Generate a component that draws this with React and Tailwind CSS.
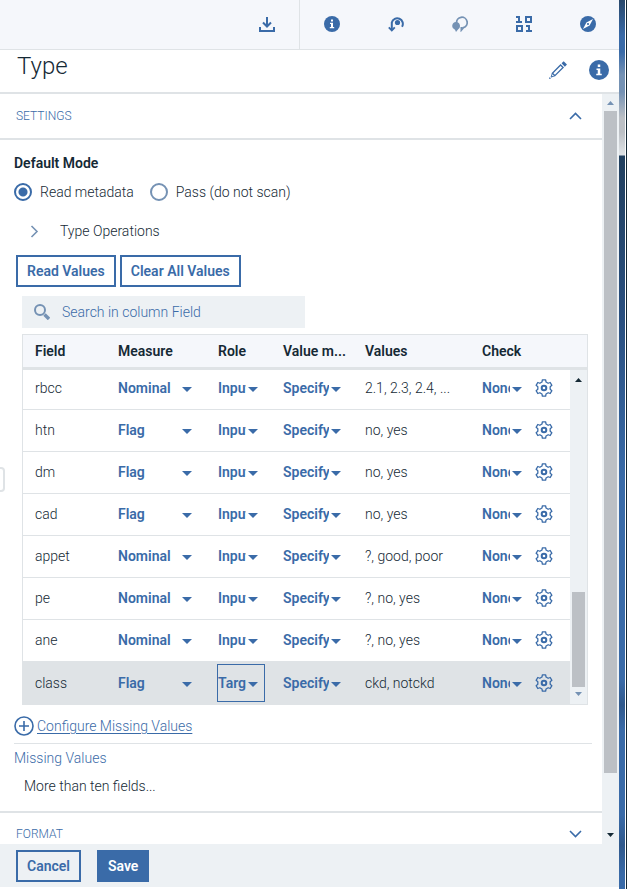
import React from "react";

const rows = [
  { field: "rbcc", measure: "Nominal", role: "Input", values: "2.1, 2.3, 2.4, ..." },
  { field: "htn", measure: "Flag", role: "Input", values: "no, yes" },
  { field: "dm", measure: "Flag", role: "Input", values: "no, yes" },
  { field: "cad", measure: "Flag", role: "Input", values: "no, yes" },
  { field: "appet", measure: "Nominal", role: "Input", values: "?, good, poor" },
  { field: "pe", measure: "Nominal", role: "Input", values: "?, no, yes" },
  { field: "ane", measure: "Nominal", role: "Input", values: "?, no, yes" },
  { field: "class", measure: "Flag", role: "Target", values: "ckd, notckd", selected: true },
];

function InfoIcon({ className }) {
  return (
    <svg viewBox="0 0 16 16" className={className} aria-hidden="true">
      <circle cx="8" cy="8" r="8" fill="#3a6ba8" />
      <path d="M7 3.6h2v2H7zM6 6.7h3v4.2h1.2v1.3H5.8v-1.3H7V8H6z" fill="#fff" />
    </svg>
  );
}

function DownloadIcon() {
  return (
    <svg viewBox="0 0 16 16" className="size-4" fill="none" stroke="#3a6ba8" strokeWidth="2" aria-hidden="true">
      <path d="M8 1v10M4 6.500l4 4 4-4M1 11v4h14v-4" />
    </svg>
  );
}

function LoopIcon() {
  return (
    <svg viewBox="0 0 16 16" className="size-4" fill="none" aria-hidden="true">
      <circle cx="9.5" cy="6.500" r="2.600" fill="#3a6ba8" />
      <path d="M14 10.800A5.600 5.600 0 1 0 3.800 6.500V14" stroke="#3a6ba8" strokeWidth="2" />
      <path d="M.800 11.400l3 3 3-3" stroke="#3a6ba8" strokeWidth="1.800" />
    </svg>
  );
}

function CommentIcon() {
  return (
    <svg viewBox="0 0 16 16" className="size-4" aria-hidden="true">
      <path d="M4.600 7A5.300 5.300 0 1 1 11.400 11.600L9.400 14V11" fill="none" stroke="#7592b4" strokeWidth="1.800" />
      <path d="M4 6a4 4 0 0 1 2.200 7.300L4 16l-1-2.200A4 4 0 0 1 4 6z" fill="#7592b4" />
    </svg>
  );
}

function BinaryIcon() {
  return (
    <svg viewBox="0 0 16 16" className="size-4" fill="none" stroke="#3a6ba8" strokeWidth="2" aria-hidden="true">
      <path d="M0 1h3v5M0 6h6M10 1h5v5h-5zM1 10h5v5H1zM10 10h3v5M10 15h6" />
    </svg>
  );
}

function CompassIcon() {
  return (
    <svg viewBox="0 0 16 16" className="size-4" aria-hidden="true">
      <circle cx="8" cy="8" r="8" fill="#3a6ba8" />
      <path d="M13 3L9.600 9.600 3 13l3.400-6.600z" fill="#fff" />
      <circle cx="8" cy="8" r="1.100" fill="#3a6ba8" />
    </svg>
  );
}

function PencilIcon() {
  return (
    <svg viewBox="0 0 18 18" className="size-[18px]" fill="none" stroke="#3a6ba8" strokeWidth="1.300" aria-hidden="true">
      <path d="M11.600 4l2.500 2.500-8.200 8.200-2.500-2.500z" />
      <path d="M13.600 1.300l3.300 3.300" strokeWidth="3" />
      <path d="M3.400 12.200l-1.300 3.900 3.800-1.400" strokeWidth="1" />
      <path d="M0 18l.6-2 1.400 1.400z" fill="#3a6ba8" stroke="none" />
    </svg>
  );
}

function Chevron({ d, w, h, stroke = "#3a6ba8" }) {
  return (
    <svg viewBox={`0 0 ${w} ${h}`} width={w} height={h} fill="none" stroke={stroke} strokeWidth="1.600" aria-hidden="true">
      <path d={d} />
    </svg>
  );
}

const gearPath = (() => {
  const pts = [];
  for (let i = 0; i < 6; i++) {
    const base = (i * 60 - 90) * (Math.PI / 180);
    [[-0.33, 6.3], [-0.2, 8.3], [0.2, 8.3], [0.33, 6.3]].forEach(([a, r]) => {
      pts.push(`${(9 + r * Math.cos(base + a)).toFixed(2)} ${(9 + r * Math.sin(base + a)).toFixed(2)}`);
    });
  }
  return `M${pts.join("L")}z`;
})();

function GearIcon() {
  return (
    <svg viewBox="0 0 18 18" className="size-[18px]" fill="none" stroke="#3a6ba8" aria-hidden="true">
      <path d={gearPath} strokeWidth="1.300" strokeLinejoin="round" />
      <circle cx="9" cy="9" r="2.300" strokeWidth="2" />
    </svg>
  );
}

function Dropdown({ label, value, className, focused }) {
  return (
    <div className={`relative h-9 ${className} ${focused ? "outline outline-[#3a6ba8]" : ""}`}>
      <select
        aria-label={label}
        defaultValue={value}
        className="block h-9 w-full cursor-pointer appearance-none overflow-hidden bg-transparent pr-[18px] font-semibold text-[#3a6ba8] outline-none"
      >
        <option>{value}</option>
      </select>
      <svg viewBox="0 0 10 5" className="pointer-events-none absolute top-[17px] right-[6px] h-[5px] w-[10px]" fill="#3a6ba8" aria-hidden="true">
        <path d="M0 0h10L5 5z" />
      </svg>
    </div>
  );
}

function Arrow({ up, color }) {
  return (
    <svg viewBox="0 0 7 4" className="h-1 w-[7px]" fill={color} aria-hidden="true">
      <path d={up ? "M0 4h7L3.500 0z" : "M0 0h7L3.500 4z"} />
    </svg>
  );
}

function ToolButton({ label, children }) {
  return (
    <button type="button" aria-label={label} className="flex h-full w-16 items-center justify-center pb-px">
      {children}
    </button>
  );
}

function Radio({ label, checked }) {
  return (
    <label className="flex items-center gap-2">
      <input
        type="radio"
        name="mode"
        defaultChecked={checked}
        className="size-[18px] appearance-none rounded-full border-2 border-[#7592b4] checked:border-[#3a6ba8] checked:bg-[radial-gradient(circle,#3a6ba8_4px,transparent_5px)]"
      />
      <span>{label}</span>
    </label>
  );
}

export default function App() {
  return (
    <div className="flex h-screen overflow-hidden bg-white font-['Roboto','Liberation_Sans',sans-serif] text-sm leading-5 font-light text-[#152935]">
      <div className="relative flex min-w-0 flex-1 flex-col">
        <nav className="flex h-[50px] shrink-0 justify-end border-b border-[#dfe3e6] bg-[#f5f7fb]">
          <ToolButton label="Download"><DownloadIcon /></ToolButton>
          <div className="-mr-px flex border-l border-[#dfe3e6]">
            <ToolButton label="Information"><InfoIcon className="size-4" /></ToolButton>
            <ToolButton label="Versions"><LoopIcon /></ToolButton>
            <ToolButton label="Comments"><CommentIcon /></ToolButton>
            <ToolButton label="Data"><BinaryIcon /></ToolButton>
            <ToolButton label="Explore"><CompassIcon /></ToolButton>
          </div>
        </nav>

        <header className="flex h-11 shrink-0 items-center border-b-2 border-[#dfe3e6] pr-[10px] pb-[2px] pl-[17px]">
          <h1 className="flex-1 pb-2 text-2xl leading-8">Type</h1>
          <div className="flex items-center gap-[22px]">
            <button type="button" aria-label="Edit name"><PencilIcon /></button>
            <button type="button" aria-label="Help"><InfoIcon className="size-5" /></button>
          </div>
        </header>

        <div className="flex min-h-0 flex-1">
          <main className="min-w-0 flex-1 overflow-hidden">
            <button type="button" className="flex h-[46px] w-full items-center justify-between border-b-2 border-[#dfe3e6] pr-5 pl-4 text-[#3a6ba8]">
              <span className="text-xs">SETTINGS</span>
              <Chevron d="M1 7l5.500-5.500L12 7" w={13} h={8} />
            </button>

            <section className="border-b-2 border-[#dfe3e6] pt-[13px] pb-[15px]">
              <fieldset className="px-[14px]">
                <legend className="font-semibold">Default Mode</legend>
                <div className="mt-[9px] flex gap-4">
                  <Radio label="Read metadata" checked />
                  <Radio label="Pass (do not scan)" />
                </div>
              </fieldset>

              <button type="button" className="mt-[19px] flex items-center gap-[21px] pl-[30px]">
                <Chevron d="M1.500 1l5.500 5.500L1.500 12" w={9} h={13} stroke="#7592b4" />
                <span>Type Operations</span>
              </button>

              <div className="mt-[14px] flex gap-1 px-4 font-semibold text-[#3a6ba8]">
                <button type="button" className="h-8 border-2 border-[#3a6ba8] px-[9px]">Read Values</button>
                <button type="button" className="h-8 border-2 border-[#3a6ba8] px-[9px]">Clear All Values</button>
              </div>

              <label className="mt-[9px] ml-[22px] flex h-8 w-[283px] items-center gap-3 bg-[#edf1f4] px-3">
                <svg viewBox="0 0 16 16" className="size-4 shrink-0" fill="none" stroke="#7592b4" strokeWidth="2" aria-hidden="true">
                  <circle cx="6" cy="6" r="5" />
                  <path d="M10.500 10.500l4.500 4.500" strokeWidth="3.400" />
                </svg>
                <input
                  type="text"
                  aria-label="Search in column Field"
                  placeholder="Search in column Field"
                  className="min-w-0 flex-1 bg-transparent outline-none placeholder:text-[#3a6ba8]"
                />
              </label>

              <div className="relative mt-[6px] mr-[14px] ml-[22px] border border-[#dfe3e6]">
                <table className="w-full table-fixed border-collapse text-left">
                  <colgroup>
                    <col className="w-[95px]" />
                    <col className="w-[100px]" />
                    <col className="w-[65px]" />
                    <col className="w-[82px]" />
                    <col />
                    <col className="w-[53px]" />
                    <col className="w-[52px]" />
                  </colgroup>
                  <thead>
                    <tr className="h-[33px] border-b-[3px] border-[#dfe3e6] bg-[#f5f7fb] whitespace-nowrap">
                      <th className="pl-3 font-semibold">Field</th>
                      <th className="font-semibold">Measure</th>
                      <th className="font-semibold">Role</th>
                      <th className="font-semibold">Value m...</th>
                      <th className="font-semibold">Values</th>
                      <th className="font-semibold">Check</th>
                      <th aria-label="Actions" />
                    </tr>
                  </thead>
                  <tbody>
                    {rows.map((row) => (
                      <tr
                        key={row.field}
                        className={`h-[42px] border-b border-[#dfe3e6] align-bottom first:h-[40px] last:h-[43px] last:border-b-0 ${row.selected ? "bg-[#dfe3e6]" : ""}`}
                      >
                        <td className="pb-[3px] pl-3 leading-9">{row.field}</td>
                        <td className="pb-[3px]"><Dropdown label="Measure" value={row.measure} className="w-20" /></td>
                        <td className="pb-[3px]"><Dropdown label="Role" value={row.role} className="w-[46px]" focused={row.selected} /></td>
                        <td className="pb-[3px]"><Dropdown label="Value mode" value="Specify" className="w-16" /></td>
                        <td className="pb-[3px] leading-9">{row.values}</td>
                        <td className="pb-[3px]"><Dropdown label="Check" value="None" className="w-[46px]" /></td>
                        <td className="pb-[3px]">
                          <button type="button" aria-label="Field settings" className="flex h-9 items-center"><GearIcon /></button>
                        </td>
                      </tr>
                    ))}
                  </tbody>
                </table>
                <div className="absolute top-[35px] right-0 bottom-0 flex w-[17px] flex-col items-center justify-between bg-[#edf1f4] py-2">
                  <Arrow up color="#152935" />
                  <div className="flex w-[13px] flex-1 flex-col justify-end py-[5px]">
                    <div className="h-[95px] bg-[#bcc0c5]" />
                  </div>
                  <Arrow color="#7592b4" />
                </div>
              </div>

              <div className="mr-[10px] ml-[14px] border-b border-[#dfe3e6] pt-[11px] pb-[7px]">
                <a href="#missing" className="flex items-center gap-[3px] text-[#3a6ba8]">
                  <svg viewBox="0 0 20 20" className="size-5" fill="none" stroke="#3a6ba8" strokeWidth="1.600" aria-hidden="true">
                    <circle cx="10" cy="10" r="9" />
                    <path d="M10 5v10M5 10h10" />
                  </svg>
                  <span className="underline underline-offset-2">Configure Missing Values</span>
                </a>
              </div>
              <h2 className="mt-1 px-[14px] text-[#3a6ba8]">Missing Values</h2>
              <p className="mt-2 px-6">More than ten fields...</p>
            </section>

            <button type="button" className="flex h-[42px] w-full items-center justify-between pr-5 pl-4 text-[#3a6ba8]">
              <span className="text-xs">FORMAT</span>
              <Chevron d="M1 1l5.500 5.500L12 1" w={13} h={8} />
            </button>
          </main>

          <div className="flex w-[17px] shrink-0 flex-col items-center bg-[#edf1f4] py-[7px]">
            <Arrow up color="#7592b4" />
            <div className="flex w-[13px] flex-1 flex-col pt-[6px]">
              <div className="h-11/12 bg-[#bcc0c5]" />
            </div>
            <Arrow color="#152935" />
          </div>
        </div>

        <footer className="mb-[2px] flex h-[43px] shrink-0 items-center gap-4 bg-[#edf1f4] px-4 font-semibold">
          <button type="button" className="h-8 border-2 border-[#3a6ba8] px-[9px] text-[#3a6ba8]">Cancel</button>
          <button type="button" className="h-8 bg-[#3a6ba8] px-[11px] text-white">Save</button>
        </footer>

        <div className="absolute top-[467px] left-0 h-[25px] w-[5px] rounded-r-[4px] border-2 border-l-0 border-[#dfe3e6] bg-white" />
      </div>
      <div className="mr-px w-[6px] shrink-0 bg-[linear-gradient(#29486b_0px,#3a6ba8_36px,#3a6ba8_52px,#7592b4_75px,#7592b4_92px,#bcc0c5_118px,#bcc0c5_132px,#dfe3e6_155px,#22405f_156px,#2a5080_320px,#3a6ba8_480px,#3a6ba8_680px,#30598c_705px,#3a6ba8_730px,#3a6ba8_815px,#30598c_845px,#3a6ba8_875px)]" />
      <div className="w-px shrink-0 bg-[#152935]" />
    </div>
  );
}
